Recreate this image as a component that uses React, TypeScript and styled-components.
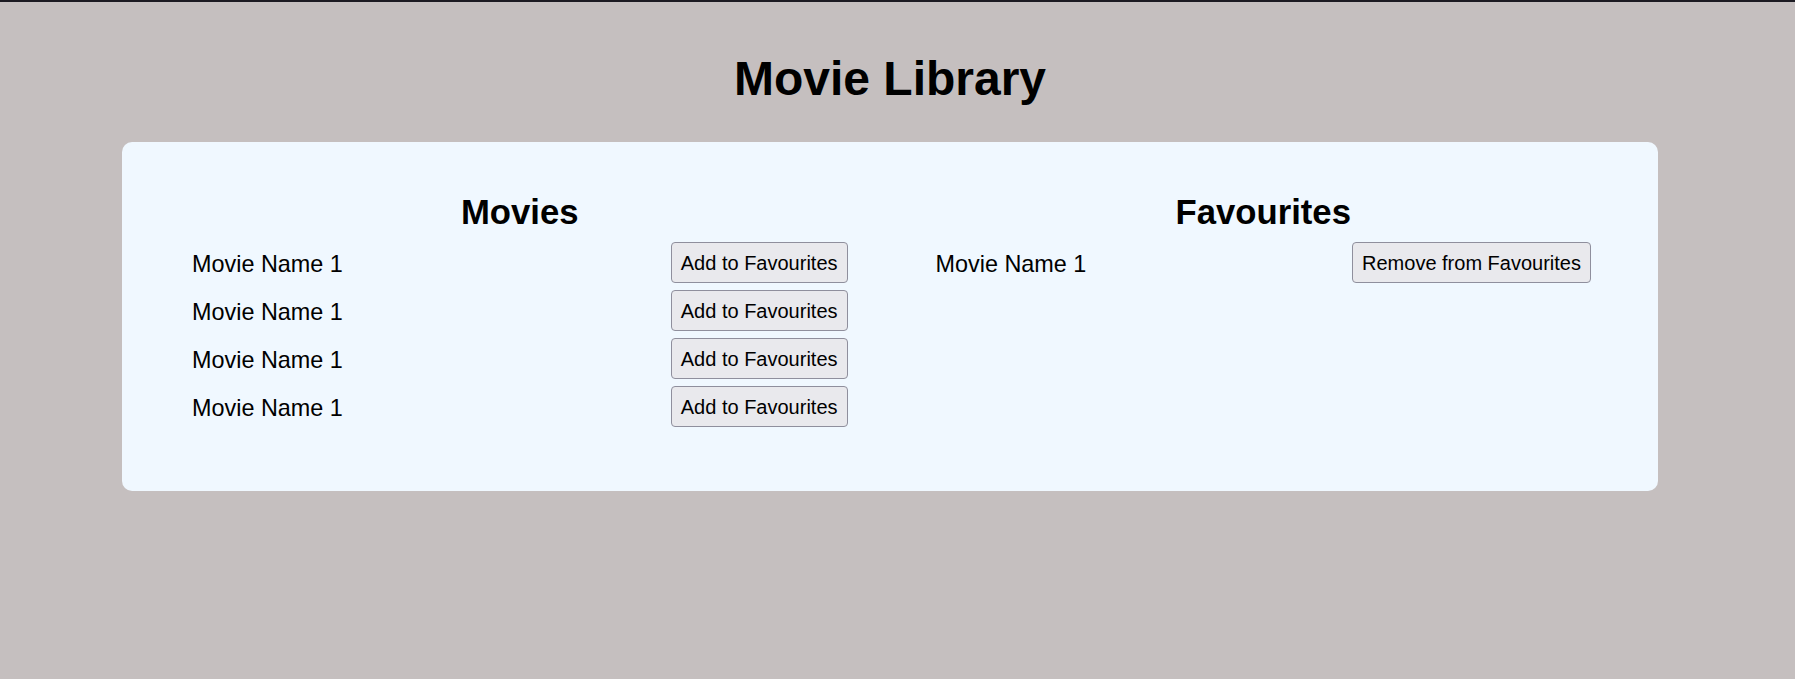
import { useState } from "react";
import styled, { createGlobalStyle } from "styled-components";

const GlobalStyle = createGlobalStyle`
  html, body {
    margin: 0;
    padding: 0;
    background-color: #c5bfbf;
  }
  body {
    border-top: 2px solid #1c1b22;
    font-family: "Liberation Sans", Arial, sans-serif;
    color: #000;
  }
`;

const Page = styled.div`
  min-height: 677px;
  padding: 49px 137px 0 122px;
  box-sizing: border-box;
`;

const Title = styled.h1`
  margin: 0 0 35px;
  font-size: 48px;
  line-height: 56px;
  font-weight: 700;
  text-align: center;
`;

const Card = styled.div`
  display: grid;
  grid-template-columns: 1fr 1fr;
  gap: 88px;
  padding: 50px 67px 64px 70px;
  background-color: #f0f8ff;
  border-radius: 10px;
`;

const Column = styled.section`
  display: flex;
  flex-direction: column;
`;

const Heading = styled.h2`
  margin: 0 0 10px;
  font-size: 34.7px;
  line-height: 40px;
  font-weight: 700;
  text-align: center;
`;

const List = styled.ul`
  list-style: none;
  margin: 0;
  padding: 0;
  display: flex;
  flex-direction: column;
  gap: 7px;
`;

const Row = styled.li`
  display: flex;
  justify-content: space-between;
  align-items: center;
  height: 41px;
`;

const Name = styled.span`
  font-size: 23.4px;
  padding-top: 3px;
`;

const Button = styled.button`
  height: 41px;
  padding: 2px 9px 0;
  font-family: "Liberation Sans", Arial, sans-serif;
  font-size: 20px;
  color: #000;
  background-color: #e9e9ed;
  border: 1px solid #8f8f9d;
  border-radius: 4px;
  cursor: pointer;

  &:hover {
    background-color: #d0d0d7;
  }
`;

interface Movie {
  id: number;
  name: string;
}

const initialMovies: Movie[] = [
  { id: 1, name: "Movie Name 1" },
  { id: 2, name: "Movie Name 1" },
  { id: 3, name: "Movie Name 1" },
  { id: 4, name: "Movie Name 1" },
];

export default function App() {
  const [movies] = useState<Movie[]>(initialMovies);
  const [favourites, setFavourites] = useState<Movie[]>([initialMovies[0]]);

  const handleAdd = (movie: Movie) => {
    if (!favourites.find((f) => f.id === movie.id)) {
      setFavourites([...favourites, movie]);
    }
  };

  const handleRemove = (id: number) => {
    setFavourites(favourites.filter((f) => f.id !== id));
  };

  return (
    <>
      <GlobalStyle />
      <Page>
        <Title>Movie Library</Title>
        <Card>
          <Column>
            <Heading>Movies</Heading>
            <List>
              {movies.map((movie) => (
                <Row key={movie.id}>
                  <Name>{movie.name}</Name>
                  <Button onClick={() => handleAdd(movie)}>
                    Add to Favourites
                  </Button>
                </Row>
              ))}
            </List>
          </Column>
          <Column>
            <Heading>Favourites</Heading>
            <List>
              {favourites.map((movie) => (
                <Row key={movie.id}>
                  <Name>{movie.name}</Name>
                  <Button onClick={() => handleRemove(movie.id)}>
                    Remove from Favourites
                  </Button>
                </Row>
              ))}
            </List>
          </Column>
        </Card>
      </Page>
    </>
  );
}
